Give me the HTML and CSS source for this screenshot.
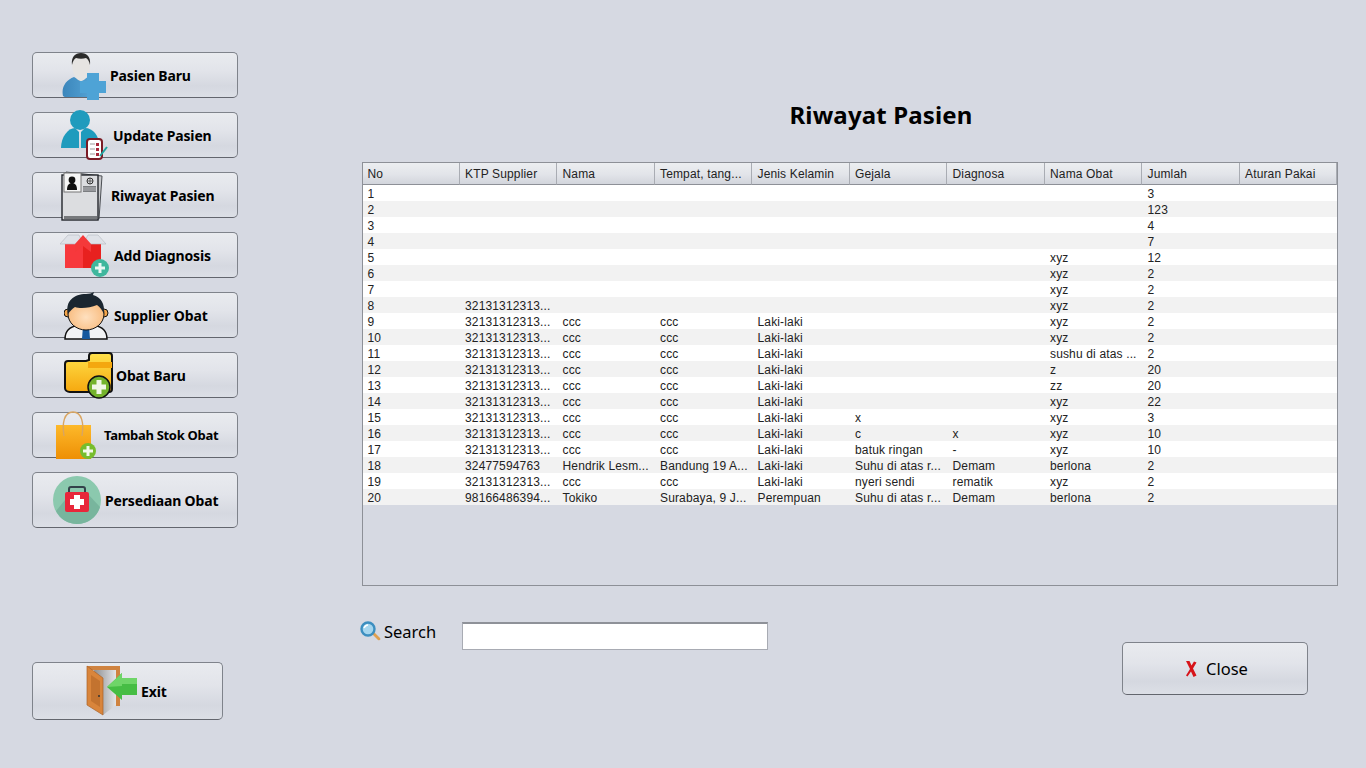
FILE: index.html
```html
<!DOCTYPE html>
<html lang="en">
<head>
    <meta charset="UTF-8">
    <meta name="viewport" content="width=device-width, initial-scale=1.0">
    <title>Riwayat Pasien</title>
    <link rel="stylesheet" href="styles.css">
</head>
<body>
<div class="page">

    <!-- Side menu -->
    <nav class="menu">
        <div class="menu-top">
            <button type="button" class="btn menu-btn pad-110">
                <svg class="icon" style="left:29px;top:-1px" width="45" height="49" viewBox="0 0 45 49">
                    <defs>
                        <linearGradient id="shoulderFill" x1="0" y1="0" x2="1" y2="0">
                            <stop offset="0" stop-color="#3b86bb"/>
                            <stop offset="1" stop-color="#5aa9da"/>
                        </linearGradient>
                    </defs>
                    <path d="M1 44c-2-9 3-16 11-19l7 4 7-4c7 2 10 8 10 14l-8 6H6c-3 0-4 0-5-1z" fill="url(#shoulderFill)"/>
                    <path d="M10 12C10 5 14 1 19 1s9 4 9 11c0 8-4 17-9 17s-9-9-9-17z" fill="#e6e4e2"/>
                    <path d="M10 13C9 5 13 1 19 1s10 4 9 12c-1-4-2-6-4-7-3 1-7 1-10 0-2 1-3 3-4 7z" fill="#2b2b2b"/>
                    <path d="M25 21h12v8h7v12h-7v7H25v-7h-7V29h7z" fill="#4ea3d6"/>
                </svg>
                <span>Pasien Baru</span>
            </button>
            <button type="button" class="btn menu-btn pad-113">
                <svg class="icon" style="left:28px;top:-3px" width="48" height="51" viewBox="0 0 48 51">
                    <circle cx="19" cy="10" r="10" fill="#1f9bbd"/>
                    <path d="M0 38C0 27 7 18 14 18l4 4v16z" fill="#1f9bbd"/>
                    <path d="M20 22l4-4c8 0 14 8 14 16l-13 4h-5z" fill="#1f9bbd"/>
                    <rect x="26" y="29" width="15" height="20" rx="3" fill="#fff" stroke="#7b1c26" stroke-width="2"/>
                    <path d="M29 34h5M29 39h5M29 44h5" stroke="#9a9a9a"/>
                    <path d="M35 33h3v3h-3zM35 38h3v3h-3zM35 43h3v3h-3z" fill="#a8283a"/>
                    <path d="M39 46l7-9" stroke="#1fa5a0" stroke-width="2"/>
                </svg>
                <span>Update Pasien</span>
            </button>
            <button type="button" class="btn menu-btn pad-111">
                <svg class="icon" style="left:28px;top:-2px" width="43" height="50" viewBox="0 0 43 50">
                    <path d="M5 1l36 4-3 43H5z" fill="#c9cacd" stroke="#4b4e53"/>
                    <rect x="1" y="4" width="36" height="45" fill="#dcdde0" stroke="#23262b" stroke-width="1.400"/>
                    <rect x="3" y="2" width="17" height="19" fill="#f6f6f6" stroke="#777"/>
                    <circle cx="11" cy="9" r="3.400" fill="#111"/>
                    <path d="M6 19c0-5 2-7 5-7s5 2 5 7z" fill="#111"/>
                    <circle cx="29" cy="10" r="3" fill="none" stroke="#333"/>
                    <path d="M26 10h6M29 7v6" stroke="#333" stroke-width=".7"/>
                    <path d="M22 15h13v6H22z" fill="#7b7d80"/>
                    <path d="M22 17h13M22 19h13" stroke="#dcdde0" stroke-width=".6"/>
                    <rect x="3" y="45" width="33" height="3" fill="#77797c"/>
                </svg>
                <span>Riwayat Pasien</span>
            </button>
            <button type="button" class="btn menu-btn pad-114">
                <svg class="icon" style="left:27px;top:1px" width="51" height="45" viewBox="0 0 51 45">
                    <rect x="5" y="10" width="36" height="24" fill="#f7383c"/>
                    <path d="M23 10h18v24H23z" fill="#e8211f"/>
                    <path d="M0 10L8 1h11l4 9zM46 10l-8-9H28l-5 9z" fill="#dfe2e8" stroke="#b4b8c0" stroke-width=".6"/>
                    <path d="M15 10l8-9 8 9v8l-8-6-8 6z" fill="#f4393a"/>
                    <circle cx="40" cy="34" r="9" fill="#3fb79d"/>
                    <path d="M38.500 29h3v3.500H45v3h-3.500V39h-3v-3.500H35v-3h3.500z" fill="#e9f7f3"/>
                </svg>
                <span>Add Diagnosis</span>
            </button>
            <button type="button" class="btn menu-btn pad-114">
                <svg class="icon" style="left:31px;top:-2px" width="45" height="49" viewBox="0 0 45 49">
                    <defs>
                        <radialGradient id="faceFill" cx=".5" cy=".6" r=".6">
                            <stop offset="0" stop-color="#fee0bf"/>
                            <stop offset="1" stop-color="#f8b878"/>
                        </radialGradient>
                    </defs>
                    <path d="M1 48c0-8 4-12 14-14h14c10 2 14 6 14 14z" fill="#f2f3f5" stroke="#111" stroke-width="1.500"/>
                    <path d="M19 35h6l1 13h-8z" fill="#15589e"/>
                    <circle cx="4" cy="22" r="4" fill="#f5a54a" stroke="#111"/>
                    <circle cx="40" cy="22" r="4" fill="#f5a54a" stroke="#111"/>
                    <ellipse cx="22" cy="23" rx="18" ry="16" fill="url(#faceFill)" stroke="#111"/>
                    <path d="M4 23C1 10 10 3 22 3c3 0 6-1 8-2l-1 3c8 2 12 9 11 19-2-4-4-7-7-9-7 3-17 4-22 2-3 2-5 4-7 7z" fill="#1b2630"/>
                </svg>
                <span>Supplier Obat</span>
            </button>
            <button type="button" class="btn menu-btn pad-116">
                <svg class="icon" style="left:31px;top:-1px" width="50" height="47" viewBox="0 0 50 47">
                    <defs>
                        <linearGradient id="folderFill" x1="0" y1="0" x2="0" y2="1">
                            <stop offset="0" stop-color="#ffe14a"/>
                            <stop offset="1" stop-color="#f6a80f"/>
                        </linearGradient>
                    </defs>
                    <path d="M4 9h18l3-1V4c0-2 1-3 3-3h17c2 0 3 1 3 3v33c0 2-1 3-3 3H6c-3 0-5-2-5-4V12c0-2 1-3 3-3z" fill="url(#folderFill)" stroke="#111" stroke-width="2"/>
                    <path d="M24 10h24v6H24z" fill="#f4a70f"/>
                    <circle cx="35" cy="35" r="11" fill="#74b32c" stroke="#111" stroke-width="1.500"/>
                    <path d="M32.500 28h5v4.500H42v5h-4.500V42h-5v-4.500H28v-5h4.500z" fill="#f1f6e7"/>
                </svg>
                <span>Obat Baru</span>
            </button>
            <button type="button" class="btn menu-btn pad-104 menu-btn-small">
                <svg class="icon" style="left:23px;top:-2px" width="42" height="49" viewBox="0 0 42 49">
                    <defs>
                        <linearGradient id="bagFill" x1="0" y1="0" x2="0" y2="1">
                            <stop offset="0" stop-color="#fdb92a"/>
                            <stop offset="1" stop-color="#ee8f05"/>
                        </linearGradient>
                    </defs>
                    <rect x="0" y="14" width="35" height="34" fill="url(#bagFill)"/>
                    <path d="M8 25C6 12 8 1 17 1s11 11 9 24" fill="none" stroke="#d9a561" stroke-width="1.400"/>
                    <circle cx="32" cy="40" r="8" fill="#77bd2d"/>
                    <path d="M30.500 35h3v3.500H37v3h-3.500V45h-3v-3.500H27v-3h3.500z" fill="#f4f9ea"/>
                </svg>
                <span>Tambah Stok Obat</span>
            </button>
            <button type="button" class="btn menu-btn menu-btn-tall pad-105">
                <svg class="icon" style="left:20px;top:3px" width="48" height="48" viewBox="0 0 48 48">
                    <circle cx="24" cy="24" r="24" fill="#8bc9ae"/>
                    <path d="M3 35l9-11 21-8 14 15c-3 10-12 17-23 17-9 0-17-5-21-13z" fill="#78b59d"/>
                    <path d="M16 16v-3c0-1 1-2 2-2h12c1 0 2 1 2 2v3" fill="none" stroke="#33424a" stroke-width="2"/>
                    <rect x="12" y="16" width="24" height="20" rx="2" fill="#e8273a"/>
                    <path d="M21 19h6v4h4v6h-4v4h-6v-4h-4v-6h4z" fill="#fff"/>
                </svg>
                <span>Persediaan Obat</span>
            </button>
        </div>

        <button type="button" class="btn exit-btn">
            <svg class="icon" style="left:53px;top:2px" width="54" height="54" viewBox="0 0 54 54">
                <defs>
                    <linearGradient id="roomFill" x1="0" y1="0" x2="1" y2="0">
                        <stop offset="0" stop-color="#8d8f92"/>
                        <stop offset="1" stop-color="#e4e5e8"/>
                    </linearGradient>
                </defs>
                <path d="M1 1h33v40h-4V5H1z" fill="#cf8340"/>
                <path d="M8 5h22v35L17 50z" fill="url(#roomFill)"/>
                <path d="M1 1l16 12v37L1 40z" fill="#d9853b" stroke="#a9622a" stroke-width=".7"/>
                <path d="M5 10l9 6v26l-9-6z" fill="#c3732f"/>
                <circle cx="13" cy="31" r="1" fill="#333"/>
                <path d="M21 22L36 8v5h15v17H36v5z" fill="#46bd44"/>
                <path d="M21 22L36 8v5h15v6H36v2z" fill="#6fd568"/>
            </svg>
            <span>Exit</span>
        </button>
    </nav>

    <!-- Main content -->
    <main class="content">
        <h1 class="title">Riwayat Pasien</h1>

        <div class="table-box">
            <table class="history-table">
                <thead>
                    <tr>
                        <th>No</th><th>KTP Supplier</th><th>Nama</th><th>Tempat, tang...</th><th>Jenis Kelamin</th>
                        <th>Gejala</th><th>Diagnosa</th><th>Nama Obat</th><th>Jumlah</th><th>Aturan Pakai</th>
                    </tr>
                </thead>
                <tbody>
                    <tr><td>1</td><td></td><td></td><td></td><td></td><td></td><td></td><td></td><td>3</td><td></td></tr>
                    <tr><td>2</td><td></td><td></td><td></td><td></td><td></td><td></td><td></td><td>123</td><td></td></tr>
                    <tr><td>3</td><td></td><td></td><td></td><td></td><td></td><td></td><td></td><td>4</td><td></td></tr>
                    <tr><td>4</td><td></td><td></td><td></td><td></td><td></td><td></td><td></td><td>7</td><td></td></tr>
                    <tr><td>5</td><td></td><td></td><td></td><td></td><td></td><td></td><td>xyz</td><td>12</td><td></td></tr>
                    <tr><td>6</td><td></td><td></td><td></td><td></td><td></td><td></td><td>xyz</td><td>2</td><td></td></tr>
                    <tr><td>7</td><td></td><td></td><td></td><td></td><td></td><td></td><td>xyz</td><td>2</td><td></td></tr>
                    <tr><td>8</td><td>32131312313...</td><td></td><td></td><td></td><td></td><td></td><td>xyz</td><td>2</td><td></td></tr>
                    <tr><td>9</td><td>32131312313...</td><td>ccc</td><td>ccc</td><td>Laki-laki</td><td></td><td></td><td>xyz</td><td>2</td><td></td></tr>
                    <tr><td>10</td><td>32131312313...</td><td>ccc</td><td>ccc</td><td>Laki-laki</td><td></td><td></td><td>xyz</td><td>2</td><td></td></tr>
                    <tr><td>11</td><td>32131312313...</td><td>ccc</td><td>ccc</td><td>Laki-laki</td><td></td><td></td><td>sushu di atas ...</td><td>2</td><td></td></tr>
                    <tr><td>12</td><td>32131312313...</td><td>ccc</td><td>ccc</td><td>Laki-laki</td><td></td><td></td><td>z</td><td>20</td><td></td></tr>
                    <tr><td>13</td><td>32131312313...</td><td>ccc</td><td>ccc</td><td>Laki-laki</td><td></td><td></td><td>zz</td><td>20</td><td></td></tr>
                    <tr><td>14</td><td>32131312313...</td><td>ccc</td><td>ccc</td><td>Laki-laki</td><td></td><td></td><td>xyz</td><td>22</td><td></td></tr>
                    <tr><td>15</td><td>32131312313...</td><td>ccc</td><td>ccc</td><td>Laki-laki</td><td>x</td><td></td><td>xyz</td><td>3</td><td></td></tr>
                    <tr><td>16</td><td>32131312313...</td><td>ccc</td><td>ccc</td><td>Laki-laki</td><td>c</td><td>x</td><td>xyz</td><td>10</td><td></td></tr>
                    <tr><td>17</td><td>32131312313...</td><td>ccc</td><td>ccc</td><td>Laki-laki</td><td>batuk ringan</td><td>-</td><td>xyz</td><td>10</td><td></td></tr>
                    <tr><td>18</td><td>32477594763</td><td>Hendrik Lesm...</td><td>Bandung 19 A...</td><td>Laki-laki</td><td>Suhu di atas r...</td><td>Demam</td><td>berlona</td><td>2</td><td></td></tr>
                    <tr><td>19</td><td>32131312313...</td><td>ccc</td><td>ccc</td><td>Laki-laki</td><td>nyeri sendi</td><td>rematik</td><td>xyz</td><td>2</td><td></td></tr>
                    <tr><td>20</td><td>98166486394...</td><td>Tokiko</td><td>Surabaya, 9 J...</td><td>Perempuan</td><td>Suhu di atas r...</td><td>Demam</td><td>berlona</td><td>2</td><td></td></tr>
                </tbody>
            </table>
        </div>

        <div class="bottom-row">
            <div class="search-area">
                <label class="search-label" for="searchInput">
                    <svg width="21" height="21" viewBox="0 0 21 21">
                        <path d="M12 13l2-2 6 6c1 1 0 3-2 2z" fill="#e0a04e"/>
                        <circle cx="8" cy="8" r="6.500" fill="#a6d6ee" stroke="#3d8fc0" stroke-width="2.400"/>
                        <path d="M4 7c1-2 2-3 4-3" fill="none" stroke="#fff" stroke-width="1.500"/>
                    </svg>
                    <span>Search</span>
                </label>
                <input id="searchInput" class="search-input" type="text">
            </div>
            <button type="button" class="btn close-btn">
                <svg width="13" height="16" viewBox="0 0 13 16">
                    <path d="M1 0h3.500l2 4.500L9 0.500l2.500 1-3.500 6 3.500 7-3 1.500-2.500-5.500-3.500 5L1 14.500 5 8z" fill="#d7141a"/>
                </svg>
                <span>Close</span>
            </button>
        </div>
    </main>

</div>
</body>
</html>
```

FILE: styles.css
```css
html, body {
    margin: 0;
    height: 100%;
}

body {
    background-color: #d6d9e2;
    color: #000;
    overflow: hidden;
}

.page {
    display: flex;
    height: 768px;
}

/* Buttons */
.btn {
    position: relative;
    display: flex;
    align-items: center;
    box-sizing: border-box;
    margin: 0;
    border: 1px solid #7f838b;
    border-bottom-color: #63666e;
    border-radius: 5px;
    background: linear-gradient(to bottom, #e9ebef 0%, #e2e4ea 40%, #d5d8e0 75%, #dcdfe6 100%);
    color: #000;
    font-family: "Noto Sans", sans-serif;
    cursor: pointer;
}

.icon {
    position: absolute;
}

/* Side menu */
.menu {
    display: flex;
    flex-direction: column;
    justify-content: space-between;
    flex-shrink: 0;
    box-sizing: border-box;
    width: 362px;
    padding: 52px 0 48px 32px;
}

.menu-top {
    display: flex;
    flex-direction: column;
    gap: 14px;
}

.menu-btn {
    width: 206px;
    height: 46px;
    font-size: 14px;
    font-weight: 700;
    letter-spacing: -0.15px;
}

.menu-btn-small {
    font-size: 13px;
    letter-spacing: -0.3px;
}

.menu-btn-tall {
    height: 56px;
}

.pad-104 { padding-left: 71px; }
.pad-105 { padding-left: 72px; }
.pad-110 { padding-left: 77px; }
.pad-111 { padding-left: 78px; }
.pad-113 { padding-left: 80px; }
.pad-114 { padding-left: 81px; }
.pad-116 { padding-left: 83px; }

.exit-btn {
    width: 191px;
    height: 58px;
    padding-left: 108px;
    font-size: 14px;
    font-weight: 700;
    letter-spacing: -0.15px;
}

/* Main content */
.content {
    flex: 1;
    min-width: 0;
    display: flex;
    flex-direction: column;
    padding-right: 28px;
}

.title {
    margin: 97px 0 30px;
    padding-left: 62px;
    height: 35px;
    line-height: 35px;
    text-align: center;
    font-family: "Noto Sans", sans-serif;
    font-size: 24px;
    font-weight: 700;
    letter-spacing: 0.15px;
}

.table-box {
    box-sizing: border-box;
    height: 424px;
    border: 1px solid #8d9097;
    overflow: hidden;
}

.history-table {
    width: 975px;
    margin-left: -1px;
    border-collapse: separate;
    border-spacing: 0;
    table-layout: fixed;
    font-family: "Liberation Sans", Arial, sans-serif;
    font-size: 12px;
    letter-spacing: 0.15px;
    color: #222;
}

.history-table th {
    box-sizing: border-box;
    height: 22px;
    padding: 1px 4px 0 5.5px;
    border-right: 1px solid #a9acb3;
    border-bottom: 1px solid #8d9097;
    background: linear-gradient(to bottom, #eceef1 0%, #e2e4e9 55%, #d2d5dc 100%);
    font-weight: 400;
    text-align: left;
    white-space: nowrap;
    overflow: hidden;
}

.history-table td {
    box-sizing: border-box;
    height: 16px;
    padding: 2px 4px 0 5.5px;
    line-height: 14px;
    white-space: nowrap;
    overflow: hidden;
    background-color: #fff;
}

.history-table tbody tr:nth-child(even) td {
    background-color: #f2f2f2;
}

/* Bottom row */
.bottom-row {
    display: flex;
    justify-content: space-between;
    align-items: flex-start;
    margin-top: 36px;
    padding-right: 30px;
}

.search-area {
    display: flex;
    align-items: flex-start;
    margin-left: -2px;
}

.search-label {
    display: flex;
    align-items: center;
    gap: 3px;
    width: 102px;
    height: 18px;
    font-family: "Noto Sans", sans-serif;
    font-size: 16.5px;
}

.search-input {
    box-sizing: border-box;
    width: 306px;
    height: 28px;
    margin: 0;
    padding: 0 4px;
    border: 1px solid #a8abb3;
    border-top: 2px solid #8e9198;
    background-color: #fff;
    outline: none;
}

.close-btn {
    justify-content: center;
    gap: 8px;
    width: 186px;
    height: 53px;
    margin-top: 20px;
    padding-left: 9px;
    font-size: 16.5px;
}
```
